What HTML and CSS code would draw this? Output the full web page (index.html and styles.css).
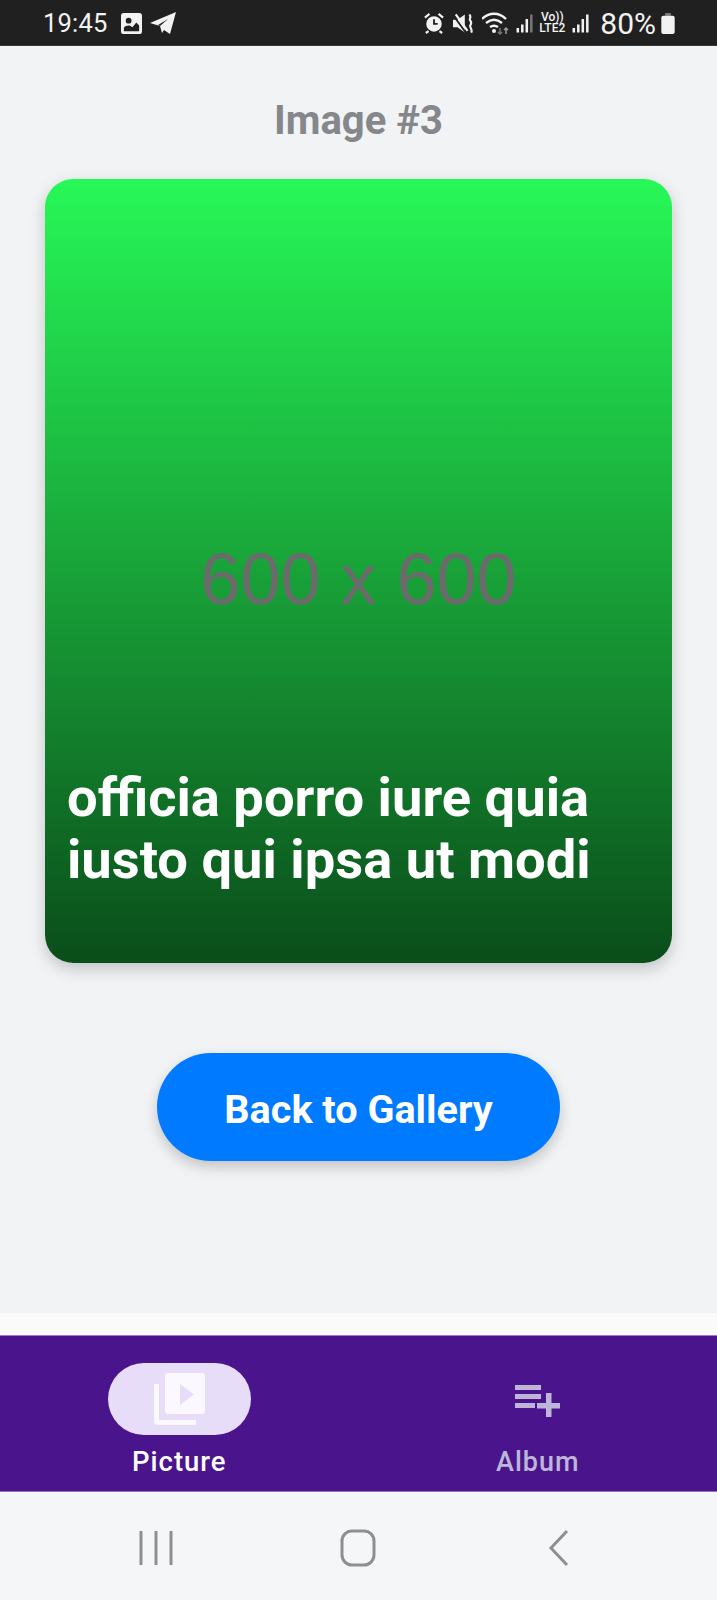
FILE: index.html
```html
<!DOCTYPE html>
<html lang="en">
<head>
<meta charset="utf-8">
<title>Image #3</title>
<link rel="stylesheet" href="styles.css">
</head>
<body>
<div class="app">
  <header class="status">
    <div class="status-left">
      <span class="clock">19:45</span>
      <svg class="ic-pic" viewBox="0 0 22 22"><path fill="#f2f2f2" fill-rule="evenodd" d="M3 0h16a3 3 0 0 1 3 3v16a3 3 0 0 1-3 3H3a3 3 0 0 1-3-3V3a3 3 0 0 1 3-3zM8 5a3 3 0 1 0 0 6 3 3 0 0 0 0-6zM3 19h16v-6l-3-3-4 5-2-1.500c-2-1-5.500-.5-7 2z"/></svg>
      <svg class="ic-tg" viewBox="0 0 26 22"><path fill="#f2f2f2" d="M26 0 20 22l-6-4-2 3-2-7L0 11z"/><path fill="#202020" d="M10 14l8-7-10 6z"/></svg>
    </div>
    <div class="status-right">
      <svg class="ic-alarm" viewBox="0 0 22 24"><circle cx="11" cy="13" r="8.500" fill="#f2f2f2"/><path d="M1 6l5-4M21 6l-5-4M5 21l-3 2M17 21l3 2" stroke="#f2f2f2" stroke-width="2.400"/><path d="M11 8v5h4" stroke="#202020" stroke-width="2" fill="none"/></svg>
      <svg class="ic-mute" viewBox="0 0 22 22"><path fill="#f2f2f2" d="M0 7h5l8-6v20l-8-6H0z"/><path d="M1 3l13 18" stroke="#202020" stroke-width="2"/><path d="M3 1l13 18" stroke="#f2f2f2" stroke-width="2.400"/><path d="M18 1c3 3-1 5 1 7s1 3 0 5 3 5 1 8" stroke="#f2f2f2" stroke-width="2.400" fill="none"/></svg>
      <svg class="ic-wifi" viewBox="0 0 28 24"><path d="M0 8c7-7 17-7 24 0M4 12c5-4 11-4 16 0M8 16c3-2 5-2 8 0" stroke="#f2f2f2" stroke-width="2.400" fill="none"/><circle cx="12" cy="20" r="2" fill="#f2f2f2"/><path d="M18 17v6M16 21l2 2 2-2" stroke="#777" stroke-width="1.500" fill="none"/><path d="M24 23v-6M22 19l2-2 2 2" stroke="#999" stroke-width="1.500" fill="none"/></svg>
      <svg class="ic-sig ic-sig-a" viewBox="0 0 20 22"><path d="M2 21v-5M7 21v-9M12 21V6" stroke="#f2f2f2" stroke-width="2.800"/><path d="M17 21V1" stroke="#777" stroke-width="2.800"/></svg>
      <span class="volte"><span>Vo))</span><span>LTE2</span></span>
      <svg class="ic-sig" viewBox="0 0 20 22"><path d="M2 21v-5M7 21v-9M12 21V6M17 21V1" stroke="#f2f2f2" stroke-width="2.800"/></svg>
      <span class="pct">80%</span>
      <svg class="ic-bat" viewBox="0 0 14 22"><path fill="#777" d="M4 0h6v3H4z"/><path fill="#f2f2f2" d="M2 3h10a2 2 0 0 1 2 2v15a2 2 0 0 1-2 2H2a2 2 0 0 1-2-2V5a2 2 0 0 1 2-2z"/></svg>
    </div>
  </header>

  <main class="content">
    <h1 class="title">Image #3</h1>
    <section class="card">
      <span class="placeholder">600 x 600</span>
      <p class="caption">officia porro iure quia iusto qui ipsa ut modi</p>
    </section>
    <button class="back">Back to Gallery</button>
  </main>

  <div class="strip"></div>

  <nav class="tabs">
    <div class="tab tab-active">
      <span class="pill">
        <svg class="ic-video" viewBox="0 0 51 52"><path fill="#fbf8ff" d="M0 11h5v36h37v5H4a4 4 0 0 1-4-4z"/><path fill="#fbf8ff" fill-rule="evenodd" d="M14 0h34a3 3 0 0 1 3 3v35a3 3 0 0 1-3 3H14a3 3 0 0 1-3-3V3a3 3 0 0 1 3-3zM26 11v21l14-10.500z"/></svg>
      </span>
      <span class="tab-label">Picture</span>
    </div>
    <div class="tab tab-idle">
      <span class="pill pill-idle">
        <svg class="ic-add" viewBox="0 0 45 32"><path fill="#bdb6d8" d="M0 0h26v5H0zM0 9h26v5H0zM0 18h20v5H0zM31 8h5.500v10H45v5.500h-8.500V32H31v-8.500h-9V18h9z"/></svg>
      </span>
      <span class="tab-label">Album</span>
    </div>
  </nav>

  <footer class="sysnav">
    <svg class="ic-recents" viewBox="0 0 34 36"><path d="M2 1v34M17 1v34M32 1v34" stroke="#8f8f8f" stroke-width="3" fill="none"/></svg>
    <svg class="ic-home" viewBox="0 0 36 38"><rect x="2" y="2" width="32" height="34" rx="10" stroke="#8f8f8f" stroke-width="3" fill="none"/></svg>
    <svg class="ic-back" viewBox="0 0 22 38"><path d="M19 2 3 19l16 17" stroke="#8f8f8f" stroke-width="3" fill="none"/></svg>
  </footer>
</div>
</body>
</html>
```

FILE: styles.css
```css
* { box-sizing: border-box; }
html, body { margin: 0; padding: 0; }
body { font-family: Roboto, "Liberation Sans", sans-serif; background: #f2f3f5; }

.app { width: 717px; height: 1600px; display: flex; flex-direction: column; overflow: hidden; }

.status {
  height: 46px; flex: none; background: #202020; color: #f2f2f2;
  display: flex; justify-content: space-between; align-items: center;
  padding: 1px 42px 0 43px;
  border-bottom: 1px solid #3a3a3a;
}
.status-left, .status-right { display: flex; align-items: center; }
.clock { font-size: 25.500px; letter-spacing: .2px; margin-right: 13px; }
.ic-pic { width: 21px; height: 21px; margin-right: 8px; }
.ic-tg { width: 26px; height: 22px; }
.ic-alarm { width: 20px; height: 22px; margin-right: 9px; }
.ic-mute { width: 20px; height: 21px; margin-right: 9px; }
.ic-wifi { width: 28px; height: 24px; margin-right: 6px; }
.ic-sig { width: 18px; height: 21px; }
.ic-sig-a { margin-right: 5px; }
.volte { display: flex; flex-direction: column; align-items: center; width: 26px; font-size: 12px; line-height: 11px; margin-right: 7px; font-weight: 500; }
.pct { font-size: 30px; margin: 0 5px 0 10px; }
.ic-bat { width: 14px; height: 21px; }

.content { flex: none; height: 1267px; display: flex; flex-direction: column; align-items: center; padding-top: 53px; }
.title { margin: 0; font-size: 40px; line-height: 44px; font-weight: 700; color: #85878b; }
.card {
  position: relative; width: 627px; height: 784px; margin-top: 36px; flex: none;
  border-radius: 28px;
  background: linear-gradient(180deg, #27f857 0%, #0a4d1a 100%);
  box-shadow: 0 6px 16px rgba(0, 0, 0, .2);
  display: flex; align-items: center; justify-content: center;
}
.placeholder { font-family: "Liberation Sans", sans-serif; font-size: 72px; color: #6b6b6b; position: relative; top: 8px; }
.caption {
  position: absolute; left: 22px; right: 22px; bottom: 72px; margin: 0;
  font-size: 54.300px; line-height: 62px; font-weight: 700; color: #fff;
}
.back {
  margin-top: 90px; width: 403px; height: 108px; flex: none; border: 0; border-radius: 54px; padding: 5px 0 0;
  background: #007bff; color: #fff; font: 700 39.600px Roboto, sans-serif;
  box-shadow: 0 6px 14px rgba(0, 0, 0, .2);
}

.strip { height: 22px; flex: none; background: #fafafa; }

.tabs { height: 157px; flex: none; background: #4a148c; display: flex; border-top: 1px solid #9b7cc0; border-bottom: 1px solid #9b6fc9; }
.tab { flex: 1; display: flex; flex-direction: column; align-items: center; padding-top: 27px; }
.pill { width: 143px; height: 72px; flex: none; border-radius: 36px; display: flex; align-items: center; justify-content: center; background: #e8ddf8; }
.pill-idle { background: none; padding-top: 4px; }
.ic-video { width: 51px; height: 52px; }
.ic-add { width: 45px; height: 32px; }
.tab-label { margin-top: 9px; line-height: 36px; font-weight: 500; letter-spacing: 1px; }
.tab-active .tab-label { color: #fdfcff; font-size: 27.500px; }
.tab-idle .tab-label { color: #bdb6d8; font-size: 27px; }

.sysnav { flex: 1; background: #f5f6f8; display: flex; align-items: center; padding-top: 3px; }
.ic-recents { width: 34px; height: 36px; margin-left: 139px; }
.ic-home { width: 36px; height: 38px; margin-left: 167px; }
.ic-back { width: 22px; height: 38px; margin-left: 172px; }
```
